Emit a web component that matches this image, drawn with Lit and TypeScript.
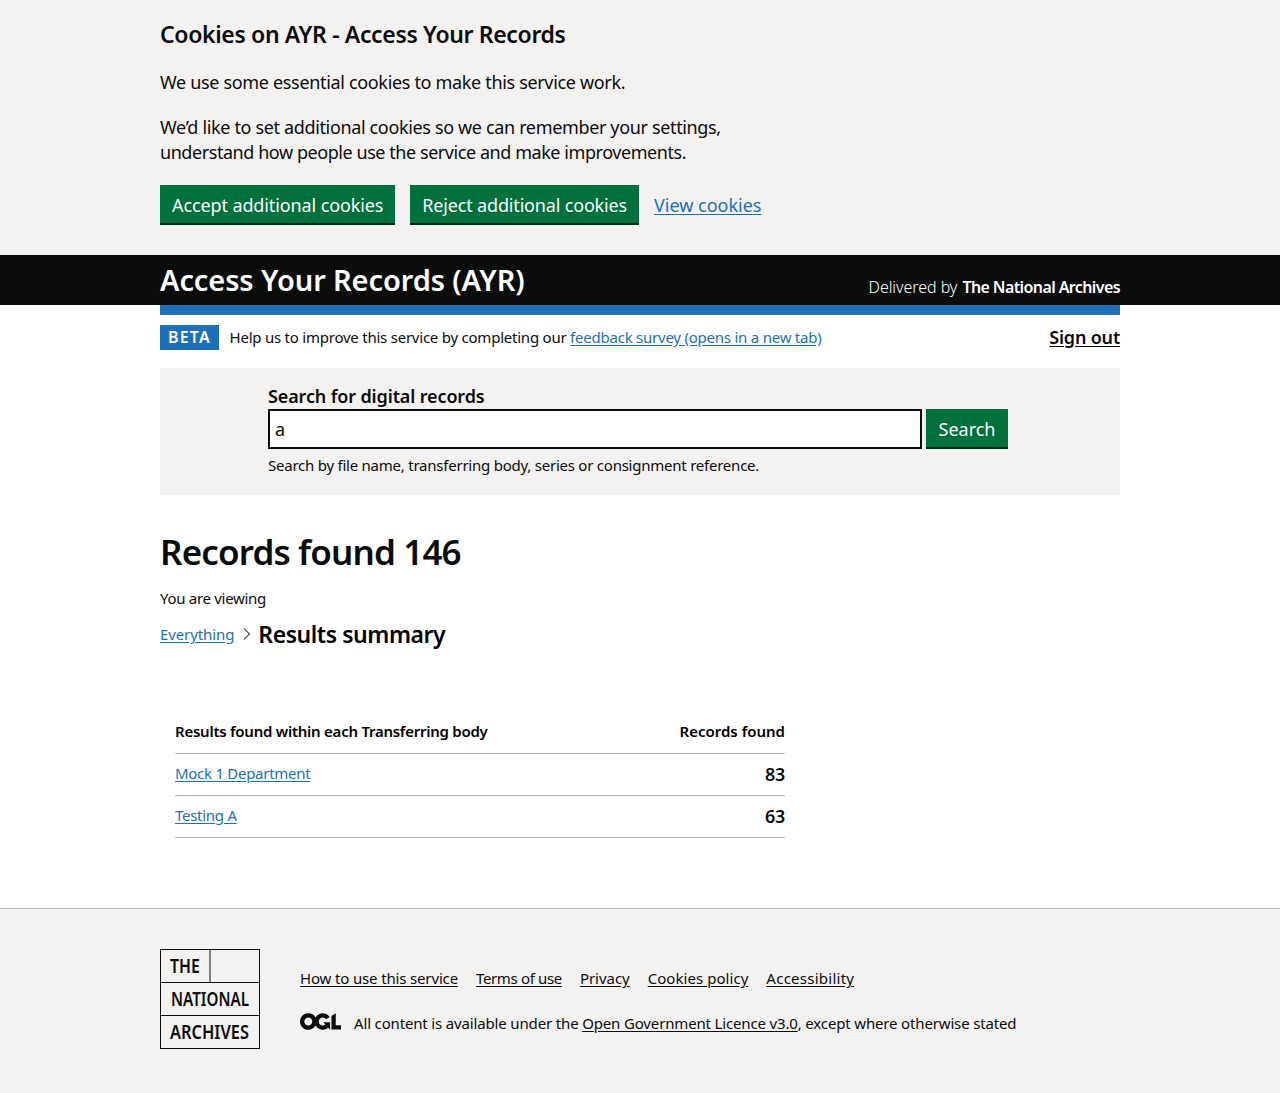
import { LitElement, html, css } from 'lit';
import { customElement } from 'lit/decorators.js';

@customElement('app-root')
export class AppRoot extends LitElement {
  static styles = css`
    :host {
      display: block;
      font-family: 'Noto Sans', sans-serif;
      color: #0b0c0c;
      background: #fff;
      height: 1093px;
      overflow: hidden;
    }
    a { color: #1d70b8; text-underline-offset: 2px; }
    .wrap { width: 960px; margin: 0 auto; }

    .cookies { background: #f3f2f1; height: 255px; padding-top: 19px; box-sizing: border-box; }
    .cookies h2 { margin: 0 0 21px; font-size: 23px; line-height: 30px; font-weight: 600; letter-spacing: -0.35px; }
    .cookies p { margin: 0 0 20px; font-size: 18px; line-height: 25px; width: 630px; letter-spacing: -0.33px; }
    .cookies p.second { letter-spacing: -0.35px; }
    .cookies p .narrow { letter-spacing: -0.44px; }
    .actions { display: flex; align-items: flex-start; gap: 15px; margin-top: 20px; }
    .btn {
      background: #00703c;
      color: #fff;
      border: 0;
      box-shadow: 0 2px 0 #002d18;
      font: inherit;
      font-size: 18px;
      line-height: 25px;
      letter-spacing: -0.11px;
      padding: 8px 12px 5px;
      height: 38px;
      box-sizing: border-box;
      margin-bottom: 2px;
    }
    .btn.reject { letter-spacing: -0.17px; }
    .actions a { font-size: 18px; line-height: 40px; letter-spacing: 0; }

    .header { background: #0b0c0c; color: #fff; height: 50px; }
    .header .wrap { display: flex; justify-content: space-between; height: 50px; }
    .service { font-size: 29px; font-weight: 600; line-height: 50px; letter-spacing: -0.1px; }
    .delivered { font-size: 16px; line-height: 20px; padding-top: 22px; font-weight: 300; letter-spacing: -0.05px; }
    .delivered b { font-weight: 600; letter-spacing: -0.6px; margin-left: 1px; }
    .rule { height: 10px; background: #1d70b8; }

    .phase { display: flex; align-items: center; height: 45px; font-size: 15px; letter-spacing: -0.23px; }
    .tag { background: #1d70b8; color: #fff; font-weight: 600; font-size: 16px; letter-spacing: 1.2px; height: 25px; line-height: 25px; padding: 0 8px; margin-right: 10.5px; }
    .phase .note { margin-bottom: 2px; }
    .phase .signout { margin: 0 0 2px auto; color: #0b0c0c; font-size: 18px; font-weight: 600; letter-spacing: -0.2px; }

    .search { background: #f3f2f1; height: 127px; margin-top: 8px; padding: 16px 108px 0; box-sizing: border-box; }
    .search label { display: block; font-size: 18px; font-weight: 600; line-height: 25px; letter-spacing: -0.13px; }
    .search .row { display: flex; gap: 4px; }
    .search input {
      width: 654px; height: 40px; box-sizing: border-box;
      border: 2px solid #0b0c0c; padding: 0 5px; font: inherit; font-size: 18px; background: #fff; color: #0b0c0c; outline: 0; border-radius: 0;
    }
    .search .btn { margin: 0; width: 82px; height: 38px; padding: 2px 0 0; letter-spacing: 0; }
    .search .hint { font-size: 15px; line-height: 20px; margin-top: 6px; letter-spacing: -0.235px; }

    h1 { margin: 37px 0 0; font-size: 35px; line-height: 40px; font-weight: 600; letter-spacing: -0.85px; }
    .viewing { margin: 16px 0 0; font-size: 15px; line-height: 20px; letter-spacing: -0.3px; }
    .crumbs { display: flex; align-items: center; height: 30px; margin-top: 11px; font-size: 15px; letter-spacing: -0.1px; }
    .crumbs svg { margin: 0 6px 0 8px; }
    .crumbs strong { font-size: 23px; font-weight: 600; color: #000; letter-spacing: -0.45px; }

    table { border-collapse: collapse; width: 610px; margin: 62px 0 0 15px; font-size: 15px; }
    th { font-weight: 600; text-align: left; height: 42px; padding: 0 0 2px; box-sizing: border-box; letter-spacing: -0.25px; color: #000; }
    th.num { letter-spacing: 0; }
    td { height: 42px; padding: 0 0 2px; box-sizing: border-box; letter-spacing: -0.28px; }
    th, td { border-bottom: 1px solid #b1b4b6; }
    .num { text-align: right; }
    td.num { font-weight: 600; font-size: 18px; letter-spacing: -0.3px; padding: 0; }

    footer { position: absolute; top: 908px; left: 0; right: 0; height: 185px; background: #f3f2f1; border-top: 1px solid #b1b4b6; box-sizing: border-box; }
    footer .wrap { display: flex; gap: 40px; padding-top: 40px; }
    .logo { flex: none; display: block; }
    .logo text { font-weight: 600; font-size: 20px; fill: #0b0c0c; }
    .links { display: flex; gap: 18px; font-size: 15px; letter-spacing: -0.15px; margin-top: 19px; line-height: 20px; }
    .links .tight { letter-spacing: -0.35px; }
    .links .mid { letter-spacing: -0.03px; }
    .links .loose { letter-spacing: 0.05px; }
    .links .loosest { letter-spacing: 0.25px; }
    footer a { color: #0b0c0c; }
    .licence { display: flex; align-items: center; gap: 13px; margin-top: 25px; font-size: 15px; letter-spacing: -0.155px; line-height: 20px; }
    .licence svg { flex: none; margin-bottom: 3px; }
  `;

  render() {
    return html`
      <section class="cookies">
        <div class="wrap">
          <h2>Cookies on AYR - Access Your Records</h2>
          <p>We use some essential cookies to make this service work.</p>
          <p class="second">We’d like to set additional cookies so we can remember your settings, <span class="narrow">understand how people use the service and make improvements.</span></p>
          <div class="actions">
            <button class="btn">Accept additional cookies</button>
            <button class="btn reject">Reject additional cookies</button>
            <a href="#">View cookies</a>
          </div>
        </div>
      </section>
      <header class="header">
        <div class="wrap">
          <div class="service">Access Your Records (AYR)</div>
          <div class="delivered">Delivered by <b>The National Archives</b></div>
        </div>
      </header>
      <div class="wrap">
        <div class="rule"></div>
        <div class="phase">
          <span class="tag">BETA</span>
          <span class="note">Help us to improve this service by completing our <a href="#">feedback survey (opens in a new tab)</a></span>
          <a class="signout" href="#">Sign out</a>
        </div>
        <div class="search">
          <label for="q">Search for digital records</label>
          <div class="row">
            <input id="q" value="a" />
            <button class="btn">Search</button>
          </div>
          <div class="hint">Search by file name, transferring body, series or consignment reference.</div>
        </div>
        <h1>Records found 146</h1>
        <p class="viewing">You are viewing</p>
        <div class="crumbs">
          <a href="#">Everything</a>
          <svg width="10" height="14" viewBox="0 0 10 14" fill="none" stroke="#505a5f" stroke-width="1.2"><path d="M2 1.500 7.500 7 2 12.500" /></svg>
          <strong>Results summary</strong>
        </div>
        <table>
          <thead>
            <tr><th>Results found within each Transferring body</th><th class="num">Records found</th></tr>
          </thead>
          <tbody>
            <tr><td><a href="#">Mock 1 Department</a></td><td class="num">83</td></tr>
            <tr><td><a href="#">Testing A</a></td><td class="num">63</td></tr>
          </tbody>
        </table>
      </div>
      <footer>
        <div class="wrap">
          <svg class="logo" width="100" height="100" viewBox="0 0 100 100">
            <g fill="none" stroke="#0b0c0c">
              <rect x="0.5" y="0.5" width="99" height="99" />
              <path d="M0 33.500H100M0 66.500H100" />
              <path d="M50 1V33" stroke="#505a5f" stroke-width="1.500" />
            </g>
            <text transform="translate(10 24) scale(.79 1)">THE</text>
            <text transform="translate(11 57) scale(.76 1)">NATIONAL</text>
            <text transform="translate(10 90) scale(.82 1)">ARCHIVES</text>
          </svg>
          <div>
            <div class="links">
              <a href="#">How to use this service</a>
              <a class="tight" href="#">Terms of use</a>
              <a class="mid" href="#">Privacy</a>
              <a class="loose" href="#">Cookies policy</a>
              <a class="loosest" href="#">Accessibility</a>
            </div>
            <div class="licence">
              <svg width="41" height="17" viewBox="0 0 483.2 195.7" fill="#0b0c0c">
                <path d="M421.5 142.8V.1l-50.7 32.3v161.1h112.4v-50.7zm-122.3-9.6A47.12 47.12 0 0 1 221 97.8c0-26 21.1-47.1 47.1-47.1 16.7 0 31.4 8.7 39.7 21.8l42.7-27.2A97.63 97.63 0 0 0 268.1 0c-36.5 0-68.3 20.1-85.1 49.7A98 98 0 0 0 97.8 0C43.9 0 0 43.9 0 97.8s43.9 97.8 97.8 97.8c36.5 0 68.3-20.1 85.1-49.7a97.76 97.76 0 0 0 149.6 25.4l19.4 22.2h3v-87.8h-80l24.3 27.5zM97.8 145c-26 0-47.1-21.1-47.1-47.1s21.1-47.1 47.1-47.1 47.2 21 47.2 47S123.8 145 97.8 145" />
              </svg>
              <span>All content is available under the <a href="#">Open Government Licence v3.0</a>, except where otherwise stated</span>
            </div>
          </div>
        </div>
      </footer>
    `;
  }
}
